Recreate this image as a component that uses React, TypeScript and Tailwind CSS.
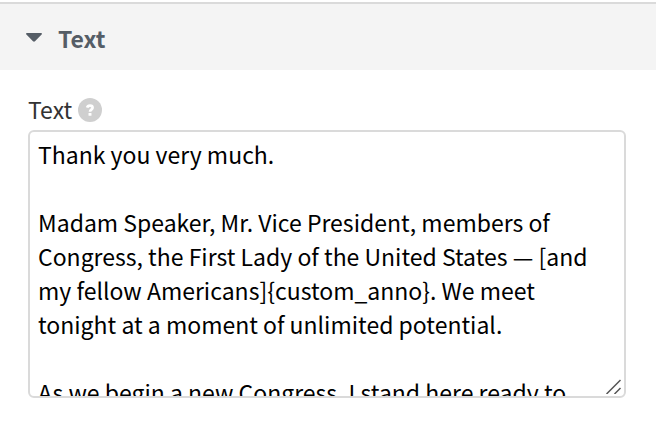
import { FC, useState } from "react";

type SectionProps = {
    title: string,
    children?: React.ReactNode,
}

const SPEECH = `Thank you very much.

Madam Speaker, Mr. Vice President, members of Congress, the First Lady of the United States — [and my fellow Americans]{custom_anno}. We meet tonight at a moment of unlimited potential.

As we begin a new Congress, I stand here ready to work with you to achieve historic breakthroughs for all Americans.`;

const Section: FC<SectionProps> = ({ title, children }) => {

    const [open, setOpen] = useState(true);

    return <section>
        <h2 className="border-t-2 border-[#dadada] bg-[#f4f4f4]">
            <button
                type="button"
                aria-expanded={open}
                onClick={() => setOpen(!open)}
                className="flex h-[66px] w-full items-center gap-4 py-1 pl-[26px] text-left text-[23px] font-bold text-[#555d66]">
                <svg className={open ? "h-4 w-4" : "h-4 w-4 -rotate-90"} viewBox="0 0 16 16" fill="currentColor" aria-hidden="true">
                    <path d="M1 4h14c1 0 1.300.9.6 1.600L9 12.200c-.6.6-1.400.6-2 0L.4 5.600C-.3 4.900 0 4 1 4Z" />
                </svg>
                <span className="pt-0.5">{title}</span>
            </button>
        </h2>
        {open && children}
    </section>
}

const HelpIcon: FC = () => {
    return <button type="button" aria-label="Help" className="h-6 w-6">
        <svg className="h-6 w-6" viewBox="0 0 24 24" fill="none" aria-hidden="true">
            <circle cx="12" cy="12" r="12" fill="#cfcfcf" />
            <path d="M9.200 9.600C9.500 8.200 10.600 7.700 12 7.700c1.600 0 2.600.8 2.600 2.100 0 1.900-2.600 1.900-2.600 4" stroke="#fff" strokeWidth="2.700" />
            <rect x="10.500" y="15" width="3" height="2.800" rx=".6" fill="#fff" />
        </svg>
    </button>
}

export default function App() {

    const [text, setText] = useState(SPEECH);

    return <main className="bg-white pt-0.5 font-['Noto_Sans_CJK_JP','Noto_Sans',sans-serif]">
        <Section title="Text">
            <div className="pt-[22px] pr-[30px] pb-7 pl-7">
                <div className="mb-0.5 flex h-9 items-center gap-1.5">
                    <label htmlFor="text" className="pb-0.5 text-[23px] text-[#333333]">Text</label>
                    <HelpIcon />
                </div>
                <div className="relative">
                    <textarea
                        id="text"
                        value={text}
                        onChange={(e) => setText(e.target.value)}
                        className="block h-[268px] w-full resize-none overflow-hidden rounded-md border-2 border-[#dadada] bg-white px-2 py-[5px] text-[23px] leading-[34px] text-black outline-none"
                    />
                    {/* resize grip */}
                    <svg className="pointer-events-none absolute right-1 bottom-1 h-4 w-4" viewBox="0 0 16 16" fill="none" stroke="#555555" strokeWidth="1.500" aria-hidden="true">
                        <path d="M.5 16 14.500 2M8.500 16 14.500 10" />
                    </svg>
                </div>
            </div>
        </Section>
    </main>
}
